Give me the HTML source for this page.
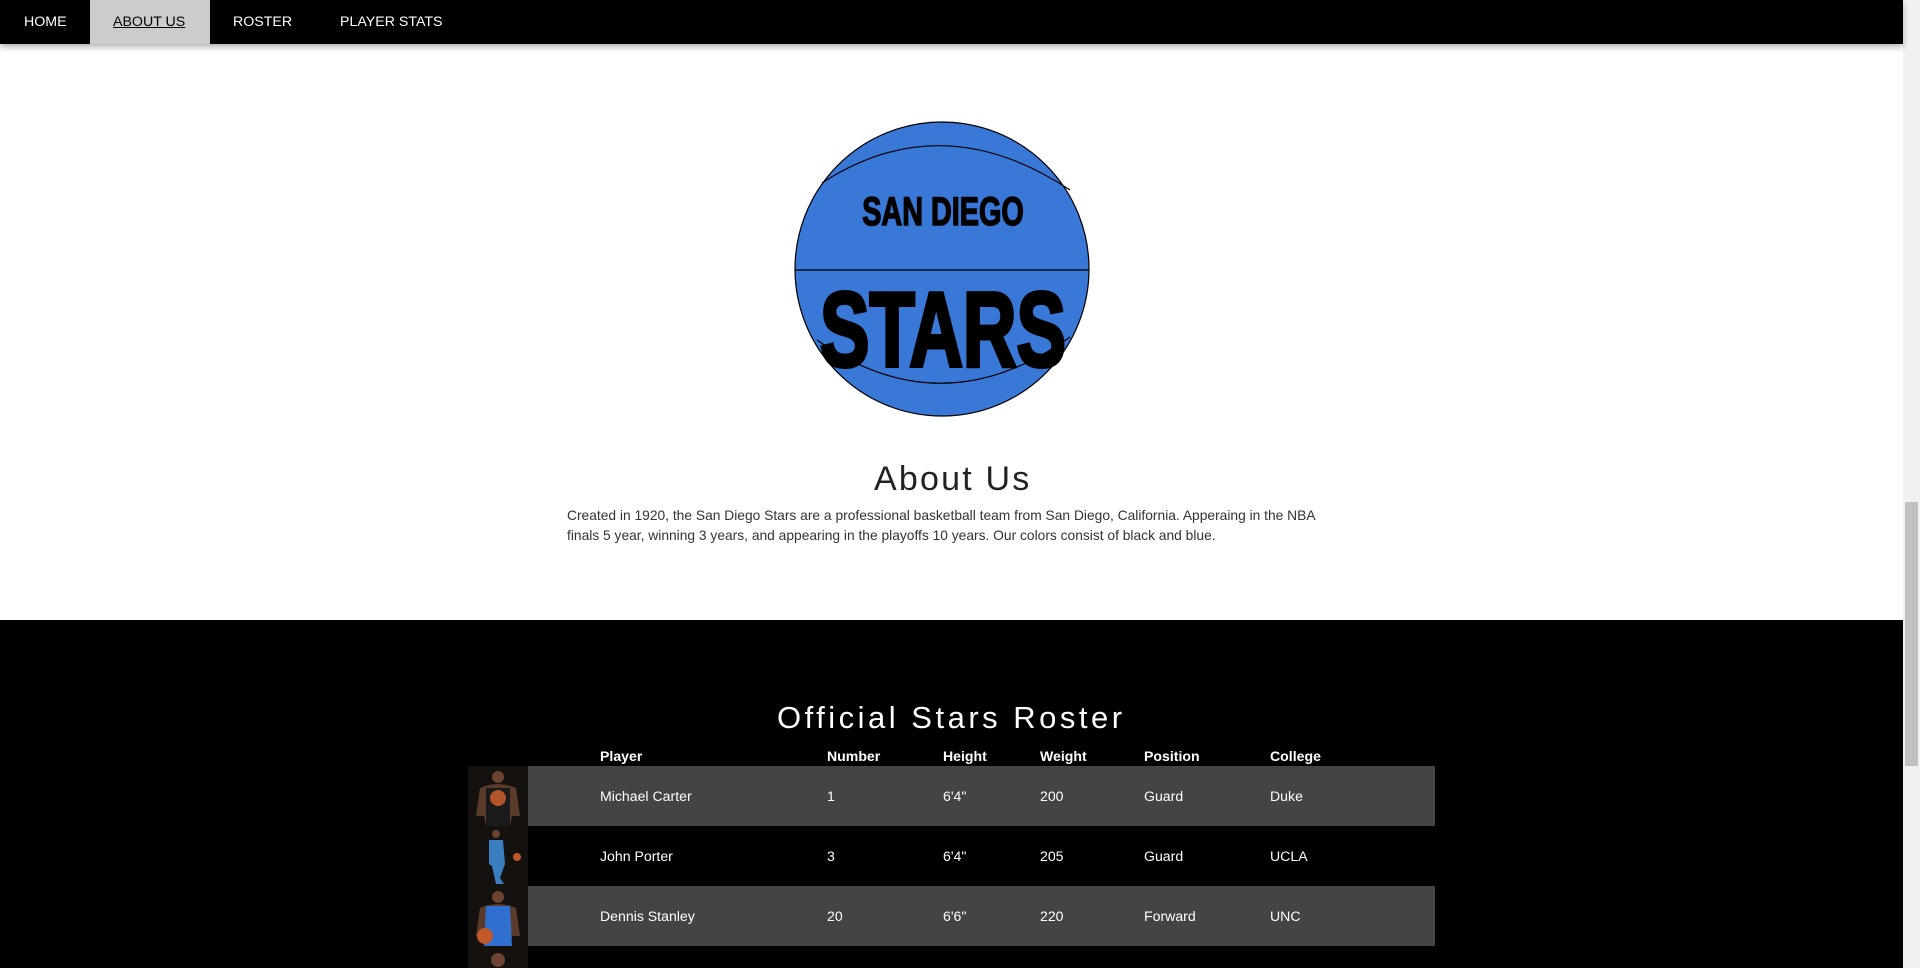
<!DOCTYPE html>
<html><head><meta charset="utf-8"><style>
*{margin:0;padding:0;box-sizing:border-box}
html,body{width:1920px;height:968px;overflow:hidden;background:#fff;font-family:"Liberation Sans",Arial,sans-serif}
#wrap{position:absolute;left:0;top:0;width:1920px;height:968px;overflow:hidden}
#nav{position:absolute;left:0;top:0;width:1903px;height:44px;background:#000;box-shadow:0 3px 6px rgba(0,0,0,.3);z-index:2}
#nav a{position:absolute;top:0;height:44px;line-height:44px;color:#fff;font-size:14.2px;text-decoration:none}
#nav a.act{background:#ccc;color:#000;text-decoration:underline;padding:0 23px;width:120px}
#about{position:absolute;left:0;top:0;width:1903px;height:620px}
h2{position:absolute;font-weight:normal;white-space:nowrap}
#black{position:absolute;left:0;top:620px;width:1903px;height:348px;background:#000;color:#fff;overflow:hidden}
.c{position:absolute;font-size:14.1px;white-space:nowrap}
.h{font-weight:bold}
.row{position:absolute;left:528px;width:907px;height:60px;background:#444}
.img{position:absolute;left:468px;width:60px;height:60px;background:#15110e;overflow:hidden}
#sb{position:absolute;left:1903px;top:0;width:17px;height:968px;background:#f1f1f1}
#thumb{position:absolute;left:1905px;top:502px;width:13px;height:264px;background:#c1c1c1}
</style></head><body><div id="wrap">
<div id="about">
<svg style="position:absolute;left:0;top:0" width="1903" height="620">
<circle cx="942" cy="269" r="147" fill="#3a78d8" stroke="#000" stroke-width="1.2"/>
<path d="M822 183 Q942 105 1070 190" fill="none" stroke="#000" stroke-width="1.2"/>
<path d="M817 340 Q942 428 1070 337" fill="none" stroke="#000" stroke-width="1.2"/>
<line x1="795" y1="270" x2="1089" y2="270" stroke="#000" stroke-width="1.2"/>
<text x="943" y="225" text-anchor="middle" font-family="Liberation Sans" font-weight="bold" font-size="40" stroke="#000" stroke-width="1.5" transform="translate(943 0) scale(0.72 1) translate(-943 0)" fill="#000">SAN DIEGO</text>
<text x="943" y="366" text-anchor="middle" font-family="Liberation Sans" font-weight="bold" font-size="106" stroke="#000" stroke-width="4" transform="translate(943 0) scale(0.70 1) translate(-943 0)" fill="#000">STARS</text>
</svg>
<h2 style="left:874px;top:460px;font-size:34px;letter-spacing:2.2px;color:#222">About Us</h2>
<p style="position:absolute;left:567px;top:506px;width:778px;font-size:13.8px;line-height:20px;color:#333">Created in 1920, the San Diego Stars are a professional basketball team from San Diego, California. Apperaing in the NBA finals 5 year, winning 3 years, and appearing in the playoffs 10 years. Our colors consist of black and blue.</p>
</div>
<div id="black">
<h2 style="left:777px;top:80px;font-size:31px;letter-spacing:3.5px;color:#fff">Official Stars Roster</h2>
<div class="c h" style="left:600px;top:128px">Player</div>
<div class="c h" style="left:827px;top:128px">Number</div>
<div class="c h" style="left:943px;top:128px">Height</div>
<div class="c h" style="left:1040px;top:128px">Weight</div>
<div class="c h" style="left:1144px;top:128px">Position</div>
<div class="c h" style="left:1270px;top:128px">College</div>
<div class="row" style="top:146px"></div>
<div class="row" style="top:266px"></div>
<div class="img" style="top:146px"><svg width="60" height="60"><circle cx="30" cy="11" r="6" fill="#6b4330"/><path d="M8 50 L12 22 Q30 14 48 22 L52 50 L44 50 L42 60 L18 60 L16 50Z" fill="#5a3a28"/><path d="M18 22 L42 22 L42 60 L18 60Z" fill="#1b1b1b"/><circle cx="30" cy="32" r="8" fill="#b0562a"/></svg></div>
<div class="img" style="top:206px"><svg width="60" height="60"><circle cx="28" cy="8" r="4" fill="#6b4330"/><path d="M21 14 L35 14 L37 38 L32 52 L36 58 L28 58 L24 40 L21 38Z" fill="#3a7ec0"/><circle cx="49" cy="31" r="4" fill="#c0582a"/></svg></div>
<div class="img" style="top:266px"><svg width="60" height="60"><circle cx="30" cy="11" r="6" fill="#6b4330"/><path d="M8 50 L12 22 Q30 14 48 22 L52 50 L44 50 L42 60 L18 60 L16 50Z" fill="#5a3a28"/><path d="M18 20 L42 20 L44 60 L16 60Z" fill="#2e6fd0"/><circle cx="17" cy="50" r="8" fill="#c0582a"/></svg></div>
<div class="img" style="top:326px"><svg width="60" height="60"><circle cx="30" cy="14" r="7" fill="#6b4330"/><path d="M10 60 L14 26 Q30 20 46 26 L50 60Z" fill="#1c2540"/></svg></div>
<div class="c" style="left:600px;top:168px">Michael Carter</div><div class="c" style="left:827px;top:168px">1</div><div class="c" style="left:943px;top:168px">6'4"</div><div class="c" style="left:1040px;top:168px">200</div><div class="c" style="left:1144px;top:168px">Guard</div><div class="c" style="left:1270px;top:168px">Duke</div>
<div class="c" style="left:600px;top:228px">John Porter</div><div class="c" style="left:827px;top:228px">3</div><div class="c" style="left:943px;top:228px">6'4"</div><div class="c" style="left:1040px;top:228px">205</div><div class="c" style="left:1144px;top:228px">Guard</div><div class="c" style="left:1270px;top:228px">UCLA</div>
<div class="c" style="left:600px;top:288px">Dennis Stanley</div><div class="c" style="left:827px;top:288px">20</div><div class="c" style="left:943px;top:288px">6'6"</div><div class="c" style="left:1040px;top:288px">220</div><div class="c" style="left:1144px;top:288px">Forward</div><div class="c" style="left:1270px;top:288px">UNC</div>
</div>
<div id="nav">
<a style="left:24px">HOME</a>
<a class="act" style="left:90px">ABOUT US</a>
<a style="left:233px">ROSTER</a>
<a style="left:340px">PLAYER STATS</a>
</div>
<div id="sb"></div><div id="thumb"></div>
</div></body></html>
